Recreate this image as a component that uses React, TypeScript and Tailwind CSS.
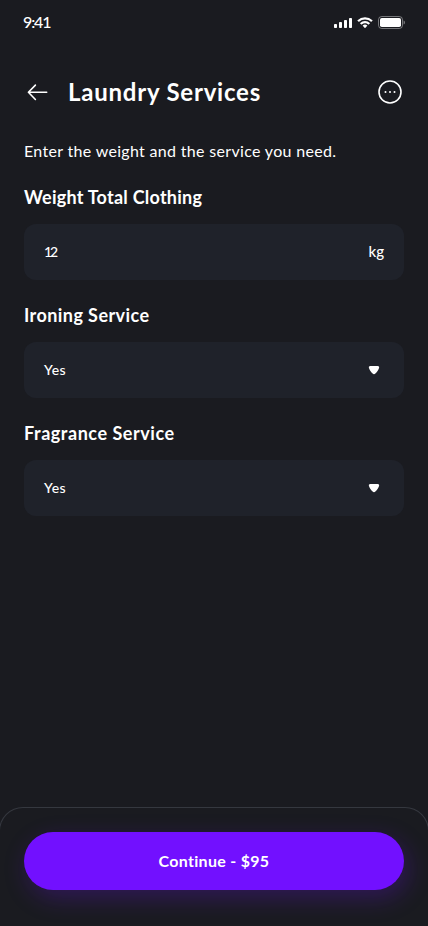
interface FieldProps {
  label: string;
  labelClass: string;
  value: string;
  valueClass: string;
  unit?: string;
}

const fields: FieldProps[] = [
  {
    label: 'Weight Total Clothing',
    labelClass: 'tracking-[0.24px]',
    value: '12',
    valueClass: 'tracking-[-2.2px]',
    unit: 'kg',
  },
  {
    label: 'Ironing Service',
    labelClass: 'tracking-[0.42px]',
    value: 'Yes',
    valueClass: 'tracking-[0.4px]',
  },
  {
    label: 'Fragrance Service',
    labelClass: 'tracking-[0.54px]',
    value: 'Yes',
    valueClass: 'tracking-[0.4px]',
  },
];

function StatusBar() {
  return (
    <div className="flex h-11 items-center justify-between px-[23px]">
      <span className="text-base leading-5 font-medium tracking-[-1.1px]">9:41</span>
      <div className="mt-px flex items-center gap-[5px]">
        <svg width="18" height="10" viewBox="0 0 18 10" fill="currentColor">
          <rect x="0" y="6" width="3" height="4" rx="0.8" />
          <rect x="5" y="4" width="3" height="6" rx="0.8" />
          <rect x="10" y="2" width="3" height="8" rx="0.8" />
          <rect x="15" y="0" width="3" height="10" rx="0.8" />
        </svg>
        <svg width="16" height="12" viewBox="0 0 16 12" fill="currentColor">
          <path d="M8 2.5c2.2 0 4.3.85 5.9 2.37.12.12.31.11.43 0l1.15-1.17a.32.32 0 0 0 0-.46 10.8 10.8 0 0 0-14.96 0 .32.32 0 0 0 0 .46l1.15 1.17c.12.11.31.12.43 0A8.57 8.57 0 0 1 8 2.5Z" />
          <path d="M8 6.3c1.2 0 2.37.45 3.26 1.26.12.11.31.11.43-.01l1.15-1.17a.33.33 0 0 0 0-.47 7.05 7.05 0 0 0-9.68 0 .33.33 0 0 0 0 .47l1.15 1.17c.12.12.31.12.43.01A4.85 4.85 0 0 1 8 6.3Z" />
          <path d="M10.25 8.87a.33.33 0 0 0-.01-.48 3.41 3.41 0 0 0-4.48 0 .33.33 0 0 0-.01.48l2.02 2.04a.32.32 0 0 0 .46 0l2.02-2.04Z" />
        </svg>
        <svg width="27" height="13" viewBox="0 0 27 13" fill="none">
          <rect x="0.5" y="0.5" width="24" height="12" rx="3.2" stroke="currentColor" strokeOpacity="0.4" />
          <rect x="2" y="2" width="21" height="9" rx="1.8" fill="currentColor" />
          <path d="M25.6 4.5v4c.8-.34 1.3-1.1 1.3-2s-.5-1.66-1.3-2Z" fill="currentColor" fillOpacity="0.45" />
        </svg>
      </div>
    </div>
  );
}

function Header() {
  return (
    <header className="flex h-12 items-center px-6">
      <button aria-label="Back">
        <svg width="28" height="28" viewBox="0 0 28 28" fill="none" stroke="currentColor" strokeWidth="1.6" strokeLinecap="round" strokeLinejoin="round">
          <path d="M4.5 14.3H22.7M11.4 7.1L4.4 14.3l7 7.2" />
        </svg>
      </button>
      <h1 className="ml-4 flex-1 text-2xl font-bold tracking-[0.78px]">Laundry Services</h1>
      <button aria-label="More">
        <svg width="28" height="28" viewBox="0 0 28 28" fill="none">
          <circle cx="14" cy="14" r="11" stroke="currentColor" strokeWidth="1.6" />
          <circle cx="9.5" cy="14" r="1" fill="currentColor" />
          <circle cx="14" cy="14" r="1" fill="currentColor" />
          <circle cx="18.5" cy="14" r="1" fill="currentColor" />
        </svg>
      </button>
    </header>
  );
}

function Field({ label, labelClass, value, valueClass, unit }: FieldProps) {
  return (
    <div>
      <h2 className={`text-lg leading-[22px] font-bold ${labelClass}`}>{label}</h2>
      <div className="mt-4 flex h-14 items-center justify-between rounded-xl bg-[#1f222a] px-5 text-sm font-medium">
        <span className={valueClass}>{value}</span>
        {unit ? (
          <span className="text-[15px]">{unit}</span>
        ) : (
          <svg width="20" height="20" viewBox="0 0 20 20" fill="currentColor">
            <path d="M6.3 5.9h7.4c1.1 0 1.7.8 1.4 1.8-.5 1.9-1.9 4.1-3.7 5.9-.8.8-2 .8-2.8 0C6.8 11.8 5.4 9.6 4.9 7.7c-.3-1 .3-1.8 1.4-1.8Z" />
          </svg>
        )}
      </div>
    </div>
  );
}

export default function App() {
  return (
    <div className="flex h-[926px] w-[428px] flex-col overflow-hidden bg-[#1a1b20] font-[Lato,'Open_Sans',sans-serif] text-white">
      <StatusBar />
      <div className="pt-6">
        <Header />
      </div>

      <main className="flex-1 px-6 pt-6">
        <p className="text-base leading-[22px] tracking-[0.32px] whitespace-nowrap">
          Enter the weight and the service you need.
        </p>
        <div className="mt-6 flex flex-col gap-6">
          {fields.map((field) => (
            <Field key={field.label} {...field} />
          ))}
        </div>
      </main>

      {/* Bottom action sheet, side borders sit just outside the screen */}
      <footer className="-mx-px h-[119px] rounded-t-[24px] border-x border-t border-[#35383f] px-6 pt-6">
        <button className="h-[58px] w-full rounded-full bg-[#7210ff] text-base font-bold tracking-[0.3px] shadow-[4px_8px_24px_rgba(114,16,255,0.25)]">
          Continue - $95
        </button>
      </footer>
    </div>
  );
}
